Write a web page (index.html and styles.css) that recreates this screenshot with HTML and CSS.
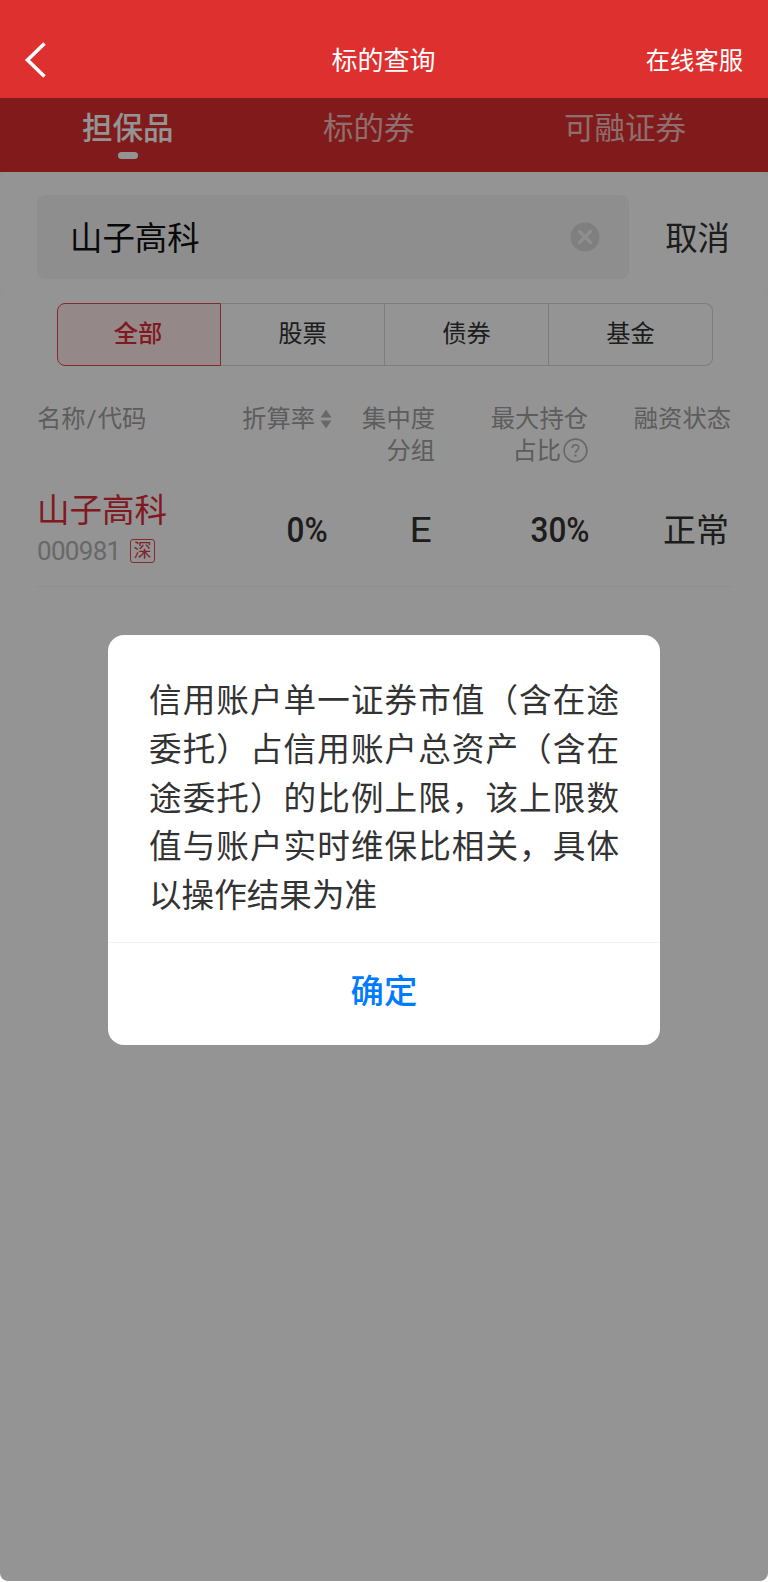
FILE: index.html
```html
<!DOCTYPE html>
<html lang="zh-CN">
  <head>
    <meta charset="UTF-8" />
    <meta name="viewport" content="width=device-width, initial-scale=1.0" />
    <title>标的查询</title>
    <link rel="stylesheet" href="styles.css">
  </head>
  <body>
    <div class="app">
      <header class="navbar">
        <svg class="back" viewBox="0 0 22 36" fill="none" stroke="#fff" stroke-width="3.6">
          <path d="M20.5 1.5 L3.5 18 L20.5 34.5" />
        </svg>
        <h1>标的查询</h1>
        <span class="service">在线客服</span>
      </header>

      <main class="page">
        <nav class="tabs">
          <span class="tab active">担保品</span>
          <span class="tab">标的券</span>
          <span class="tab">可融证券</span>
        </nav>

        <div class="search-wrap">
          <div class="search">
            <div class="search-input">
              <span>山子高科</span>
              <svg class="clear" viewBox="0 0 30 30">
                <circle cx="15" cy="15" r="14.5" fill="#dbdbdb" />
                <path d="M9.5 9.5 L20.5 20.5 M20.5 9.5 L9.5 20.5" stroke="#f5f5f5" stroke-width="3.2" stroke-linecap="round" />
              </svg>
            </div>
            <span class="cancel">取消</span>
          </div>
        </div>

        <div class="filter">
          <span class="active">全部</span>
          <span>股票</span>
          <span>债券</span>
          <span>基金</span>
        </div>

        <section class="table">
          <div class="row head">
            <div class="left">名称<span class="slash">/</span>代码</div>
            <div class="sort">
              折算率
              <svg class="arrows" viewBox="0 0 12 20" fill="#b4b4b4">
                <path d="M6 0.5 L11.5 8.5 H0.5 Z" />
                <path d="M6 19.5 L11.5 11.5 H0.5 Z" />
              </svg>
            </div>
            <div>集中度<br />分组</div>
            <div>
              最大持仓<br />
              <span class="with-icon">占比<svg class="help" viewBox="0 0 25 25" fill="none" stroke="#b4b4b4" stroke-width="1.6">
                <circle cx="12.5" cy="12.5" r="11.4" />
                <path d="M9.3 10 C9.3 5.7 15.7 5.7 15.7 9.7 C15.7 12 12.5 12.2 12.5 15" />
                <path d="M12.5 16.6 V18.6" stroke-width="2" />
              </svg></span>
            </div>
            <div>融资状态</div>
          </div>

          <div class="row data">
            <div class="left">
              <div class="name">山子高科</div>
              <div class="code"><span class="code-num">000981</span><span class="badge">深</span></div>
            </div>
            <div class="rate"><span class="num">0%</span></div>
            <div class="group"><span class="num light">E</span></div>
            <div class="ratio"><span class="num">30%</span></div>
            <div class="status">正常</div>
          </div>
        </section>

        <div class="mask">
          <div class="dialog">
            <p>信用账户单一证券市值（含在途委托）占信用账户总资产（含在途委托）的比例上限，该上限数值与账户实时维保比相关，具体以操作结果为准</p>
            <button type="button">确定</button>
          </div>
        </div>
      </main>
    </div>
  </body>
</html>
```

FILE: styles.css
```css
* {
  box-sizing: border-box;
}
body {
  margin: 0;
  background: #fff;
  font-family: Roboto, "Noto Sans CJK SC", sans-serif;
  color: #333;
}
.app {
  height: 1582px;
  display: flex;
  flex-direction: column;
  padding-bottom: 1px;
}
.navbar {
  height: 98px;
  padding: 23px 25px 0 24px;
  background: #de302f;
  color: #fff;
  display: grid;
  grid-template-columns: 1fr auto 1fr;
  align-items: center;
}
.navbar h1 {
  margin: 0;
  font-size: 26px;
  font-weight: 400;
  line-height: 36px;
}
.back {
  width: 22px;
  height: 36px;
  margin-bottom: 1px;
}
.service {
  justify-self: end;
  font-size: 24.3px;
  line-height: 36px;
}
.page {
  flex: 1;
  position: relative;
  background: #fff;
  border-radius: 0 0 8px 8px;
  overflow: hidden;
}

/* onglets */
.tabs {
  height: 74px;
  padding: 9px 82px 0;
  display: flex;
  justify-content: space-between;
  background: #de302f;
  color: rgba(255, 255, 255, 0.7);
  font-size: 30.5px;
  line-height: 44px;
}
.tab.active {
  color: #fff;
  font-weight: 500;
}
.tab.active::after {
  content: "";
  display: block;
  width: 20px;
  height: 7px;
  margin: 1px auto 0;
  border-radius: 4px;
  background: #fff;
}

/* recherche */
.search-wrap {
  background: #fafafa;
}
.search {
  height: 123px;
  padding: 23px 38px 16px 37px;
  display: flex;
  align-items: center;
  justify-content: space-between;
  background: #fff;
  border-radius: 8px;
  font-size: 32.4px;
}
.search-input {
  width: 592px;
  height: 84px;
  padding: 0 29px 0 33px;
  display: flex;
  align-items: center;
  justify-content: space-between;
  background: #f5f5f5;
  border-radius: 8px;
  color: #111;
}
.search span {
  padding-bottom: 4px;
}
.clear {
  width: 30px;
  height: 30px;
}

/* filtre */
.filter {
  height: 63px;
  margin: 8px 55px 0 57px;
  display: grid;
  grid-template-columns: repeat(4, 1fr);
  font-size: 24.3px;
  line-height: 59px;
  text-align: center;
}
.filter span {
  border: 1px solid #d8d8d8;
  border-left: none;
}
.filter span:last-child {
  border-radius: 0 8px 8px 0;
}
.filter .active {
  padding-right: 2px;
  border: 1px solid #de4a54;
  border-radius: 8px 0 0 8px;
  background: #ffecea;
  color: #de2c3a;
  font-weight: 500;
}

/* tableau */
.table {
  margin: 0 37px;
}
.row {
  display: grid;
  grid-template-columns: 180px 115px 103px 153px 143px;
  text-align: right;
}
.row .left {
  text-align: left;
}
.head {
  height: 123px;
  padding: 37px 1px 0 0;
  color: #a0a0a0;
  font-size: 24.3px;
  line-height: 31.5px;
}
.slash {
  margin: 0 1px;
}
.sort {
  display: flex;
  justify-content: flex-end;
  gap: 5px;
}
.arrows {
  width: 12px;
  height: 20px;
  margin-top: 6px;
}
.with-icon {
  display: inline-flex;
  align-items: center;
  gap: 2px;
}
.help {
  width: 25px;
  height: 25px;
}
.data {
  height: 98px;
  border-bottom: 1px solid #f5f5f5;
}
.name {
  height: 45px;
  color: #de2c3a;
  font-size: 32.5px;
  line-height: 45px;
}
.code {
  height: 34px;
  display: flex;
  align-items: center;
  color: #b4b4b4;
  font-size: 26px;
}
.code-num {
  width: 93px;
  letter-spacing: -0.7px;
}
.badge {
  width: 25px;
  height: 24px;
  border: 1px solid #de4a54;
  border-radius: 3px;
  color: #de3a44;
  font-size: 18px;
  line-height: 22px;
  text-align: center;
}
.num {
  display: inline-block;
  font-size: 35px;
  font-weight: 500;
  line-height: 84px;
  transform: scaleX(0.9);
  transform-origin: right;
}
.num.light {
  font-weight: 400;
  transform: scaleX(1.12);
}
.rate {
  padding-right: 4px;
}
.group {
  padding-right: 3px;
}
.ratio {
  margin-right: -2px;
}
.status {
  font-size: 33px;
  line-height: 84px;
  padding-right: 2px;
}

/* boite de dialogue */
.mask {
  position: absolute;
  inset: 0;
  padding-top: 537px;
  background: rgba(0, 0, 0, 0.42);
}
.dialog {
  width: 552px;
  height: 410px;
  margin: 0 auto;
  background: #fff;
  border-radius: 16px;
}
.dialog p {
  height: 308px;
  margin: 0;
  padding: 42px 41px 0;
  border-bottom: 1px solid #f3f3f3;
  font-size: 32.6px;
  line-height: 48.8px;
  text-align: justify;
}
.dialog button {
  width: 100%;
  height: 97px;
  padding: 0 0 6px;
  border: none;
  background: none;
  color: #007aff;
  font-family: inherit;
  font-size: 33.4px;
  font-weight: 500;
  cursor: pointer;
}
```
